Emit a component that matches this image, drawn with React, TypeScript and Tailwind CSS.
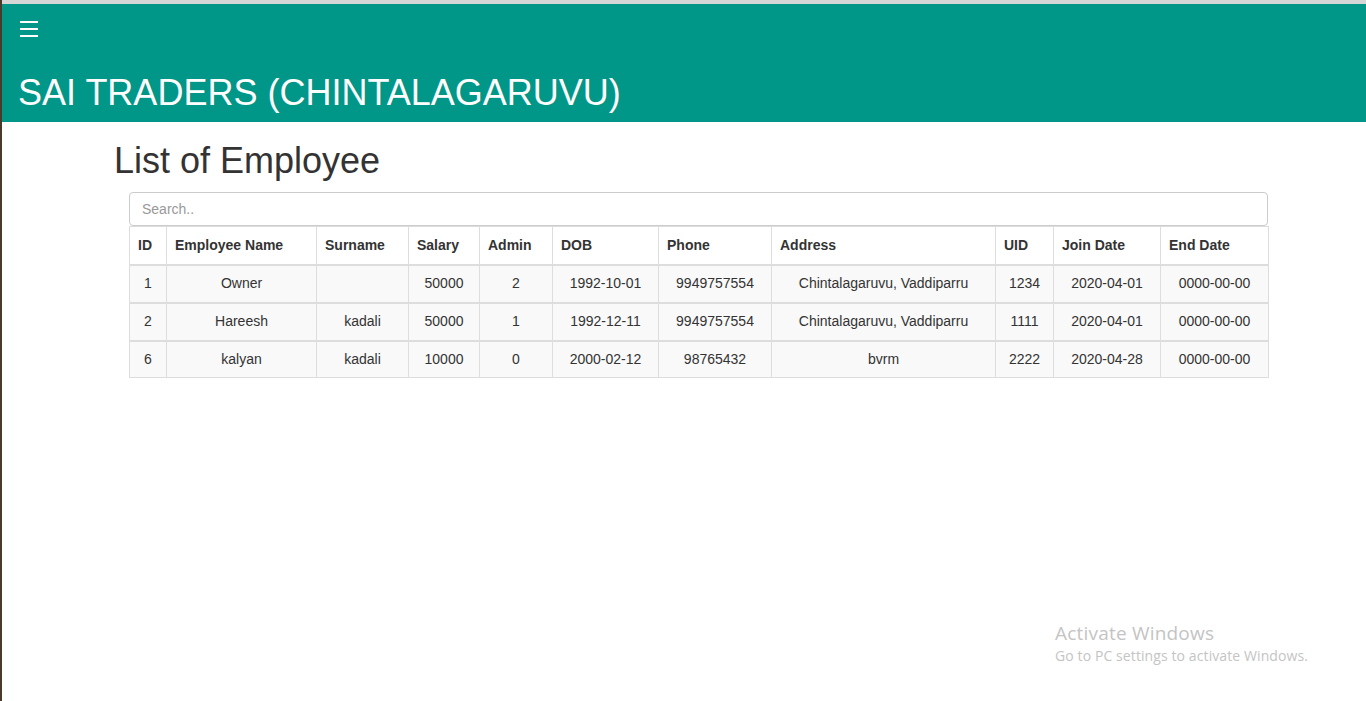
import React from "react";

const cols = [
  { name: "ID", w: 37 },
  { name: "Employee Name", w: 150 },
  { name: "Surname", w: 92 },
  { name: "Salary", w: 71 },
  { name: "Admin", w: 73 },
  { name: "DOB", w: 106 },
  { name: "Phone", w: 113 },
  { name: "Address", w: 224 },
  { name: "UID", w: 58 },
  { name: "Join Date", w: 107 },
  { name: "End Date", w: 108 },
];

const rows = [
  ["1", "Owner", "", "50000", "2", "1992-10-01", "9949757554", "Chintalagaruvu, Vaddiparru", "1234", "2020-04-01", "0000-00-00"],
  ["2", "Hareesh", "kadali", "50000", "1", "1992-12-11", "9949757554", "Chintalagaruvu, Vaddiparru", "1111", "2020-04-01", "0000-00-00"],
  ["6", "kalyan", "kadali", "10000", "0", "2000-02-12", "98765432", "bvrm", "2222", "2020-04-28", "0000-00-00"],
];

export default function App() {
  return (
    <div
      className="relative flex h-[701px] w-[1366px] overflow-hidden bg-white text-[#333]"
      style={{ fontFamily: '"Liberation Sans", Arial, sans-serif' }}
    >
      <div className="w-[2px] shrink-0 bg-[#4a3a2a]" />
      <div className="flex min-w-0 flex-1 flex-col">
        <div className="h-[4px] bg-[#d6d6d6]" />
        <header className="h-[118px] bg-[#009688] text-white">
          <div className="ml-[18px] flex w-[18px] flex-col gap-[5px] pt-[17px]">
            <div className="h-[2px] bg-white" />
            <div className="h-[2px] bg-white" />
            <div className="h-[2px] bg-white" />
          </div>
          <div className="ml-[16px] mt-[38px] text-[36px] leading-[36px]">
            SAI TRADERS (CHINTALAGARUVU)
          </div>
        </header>
        <div className="ml-[112px] mt-[21px] text-[36px] leading-[36px] text-[#333]">
          List of Employee
        </div>
        <div className="ml-[127px] mt-[13px] w-[1139px]">
          <div className="flex h-[34px] items-center rounded-[4px] border border-[#ccc] pl-[12px] text-[14px] text-[#999]">
            Search..
          </div>
          <table className="w-[1139px] table-fixed border-collapse text-[14px]">
            <colgroup>
              {cols.map((c) => (
                <col key={c.name} style={{ width: c.w }} />
              ))}
            </colgroup>
            <thead>
              <tr className="bg-white">
                {cols.map((c) => (
                  <th
                    key={c.name}
                    className="h-[38px] border border-[#ddd] px-[8px] text-left font-bold text-[#333]"
                  >
                    {c.name}
                  </th>
                ))}
              </tr>
            </thead>
            <tbody>
              {rows.map((r, i) => (
                <tr key={i} className="border-t-2 border-[#ddd] bg-[#f9f9f9]">
                  {r.map((v, j) => (
                    <td
                      key={j}
                      className={
                        i === rows.length - 1
                          ? "h-[37px] whitespace-nowrap border border-t-2 border-[#ddd] px-[8px] text-center text-[#333]"
                          : "h-[38px] whitespace-nowrap border border-t-2 border-[#ddd] px-[8px] text-center text-[#333]"
                      }
                    >
                      {v}
                    </td>
                  ))}
                </tr>
              ))}
            </tbody>
          </table>
        </div>
      </div>
      <div
        className="absolute left-[1055px] top-[620px] text-[#c4c4c4]"
        style={{ fontFamily: '"Open Sans", "Noto Sans", sans-serif' }}
      >
        <div className="text-[19px] leading-[26px] tracking-[0.2px]">Activate Windows</div>
        <div className="text-[14px] leading-[20px] tracking-[0.1px]">Go to PC settings to activate Windows.</div>
      </div>
    </div>
  );
}
